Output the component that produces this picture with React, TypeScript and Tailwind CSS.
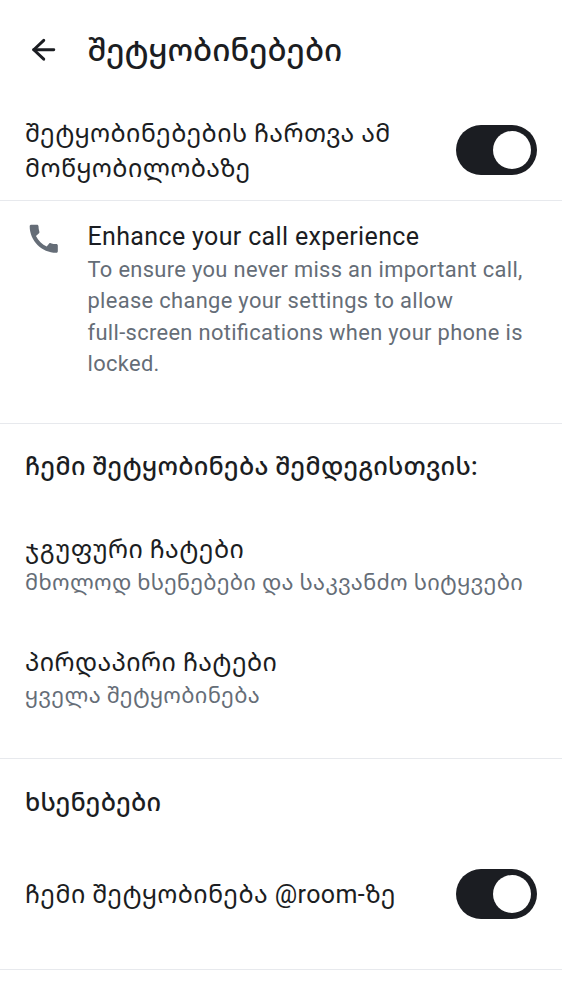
import type { ReactNode } from "react";

const title = "text-[25px] leading-[35px] tracking-[0.4px] text-[#1b1d22]";
const detail =
  "text-[21.875px] leading-[31.25px] text-[#656d77] [font-feature-settings:'liga'_1]";
const medium =
  "font-medium font-[Roboto,'Noto_Sans_Georgian_Medium','Noto_Sans_Georgian',sans-serif] text-[#1b1d22]";

function Switch() {
  return (
    <div
      role="switch"
      aria-checked="true"
      className="flex h-[50px] w-[81px] shrink-0 items-center justify-end rounded-full bg-[#1b1d22] pr-[6.25px]"
    >
      <div className="size-[37.5px] rounded-full bg-white" />
    </div>
  );
}

function Section({ className, children }: { className: string; children: ReactNode }) {
  return <section className={`border-b border-[#e7e9ed] px-[25px] ${className}`}>{children}</section>;
}

function Preference({ name, value }: { name: string; value: string }) {
  return (
    <div className="flex h-[112.5px] flex-col whitespace-nowrap">
      <span className={title}>{name}</span>
      <span className={`${detail} tracking-[0.31px]`}>{value}</span>
    </div>
  );
}

export default function App() {
  return (
    <main className="h-[1000px] w-full overflow-hidden bg-white font-[Roboto,'Noto_Sans_Georgian',sans-serif]">
      <header className="flex h-[100px] items-center pl-[25px]">
        <svg viewBox="0 0 24 24" className="size-[37.5px]" fill="none" stroke="#1b1d22" strokeWidth="1.9" strokeLinecap="round" strokeLinejoin="round">
          <path d="M12 6 L5.6 12 L12 18" />
          <path d="M5.6 12 H18.4" />
        </svg>
        <h1 className={`${medium} ml-[25px] pt-0.5 text-[31.25px] leading-10`}>შეტყობინებები</h1>
      </header>

      <Section className="flex h-[101px] items-center justify-between">
        <p className={`${title} pt-0.5`}>
          შეტყობინებების ჩართვა ამ
          <br />
          მოწყობილობაზე
        </p>
        <Switch />
      </Section>

      <Section className="flex h-[223px] gap-[25px] pt-[18px]">
        <svg viewBox="0 0 24 24" className="mt-[0.5px] size-[37.5px] shrink-0" fill="#656d77">
          <path d="M20.01 15.38c-1.23 0-2.42-.2-3.53-.56-.35-.12-.74-.03-1.01.24l-1.57 1.97c-2.83-1.35-5.48-3.9-6.89-6.83l1.95-1.66c.27-.28.35-.67.24-1.02-.37-1.11-.56-2.3-.56-3.53 0-.54-.45-.99-.99-.99H4.19C3.65 3 3 3.24 3 3.99 3 13.28 10.73 21 20.01 21c.71 0 .99-.63.99-1.18v-3.45c0-.54-.45-.99-.99-.99z" />
        </svg>
        <div>
          <p className="text-[25px] leading-[35px] tracking-[0.35px] text-[#1b1d22]">Enhance your call experience</p>
          <p className={`${detail} whitespace-nowrap tracking-[0.34px]`}>
            To ensure you never miss an important call,
            <br />
            please change your settings to allow
            <br />
            full-screen notifications when your phone is
            <br />
            locked.
          </p>
        </div>
      </Section>

      <Section className="h-[335px] pt-[25px]">
        <h2 className={`${medium} mb-12 whitespace-nowrap text-[25px] leading-[35px] tracking-[0.28px]`}>
          ჩემი შეტყობინება შემდეგისთვის:
        </h2>
        <Preference name="ჯგუფური ჩატები" value="მხოლოდ ხსენებები და საკვანძო სიტყვები" />
        <Preference name="პირდაპირი ჩატები" value="ყველა შეტყობინება" />
      </Section>

      <Section className="h-[211px] pt-[26px]">
        <h2 className={`${medium} text-[25px] leading-[35px] tracking-[0.25px]`}>ხსენებები</h2>
        <div className="mt-[49px] flex items-center justify-between">
          <p className={title}>ჩემი შეტყობინება @room-ზე</p>
          <Switch />
        </div>
      </Section>
    </main>
  );
}
